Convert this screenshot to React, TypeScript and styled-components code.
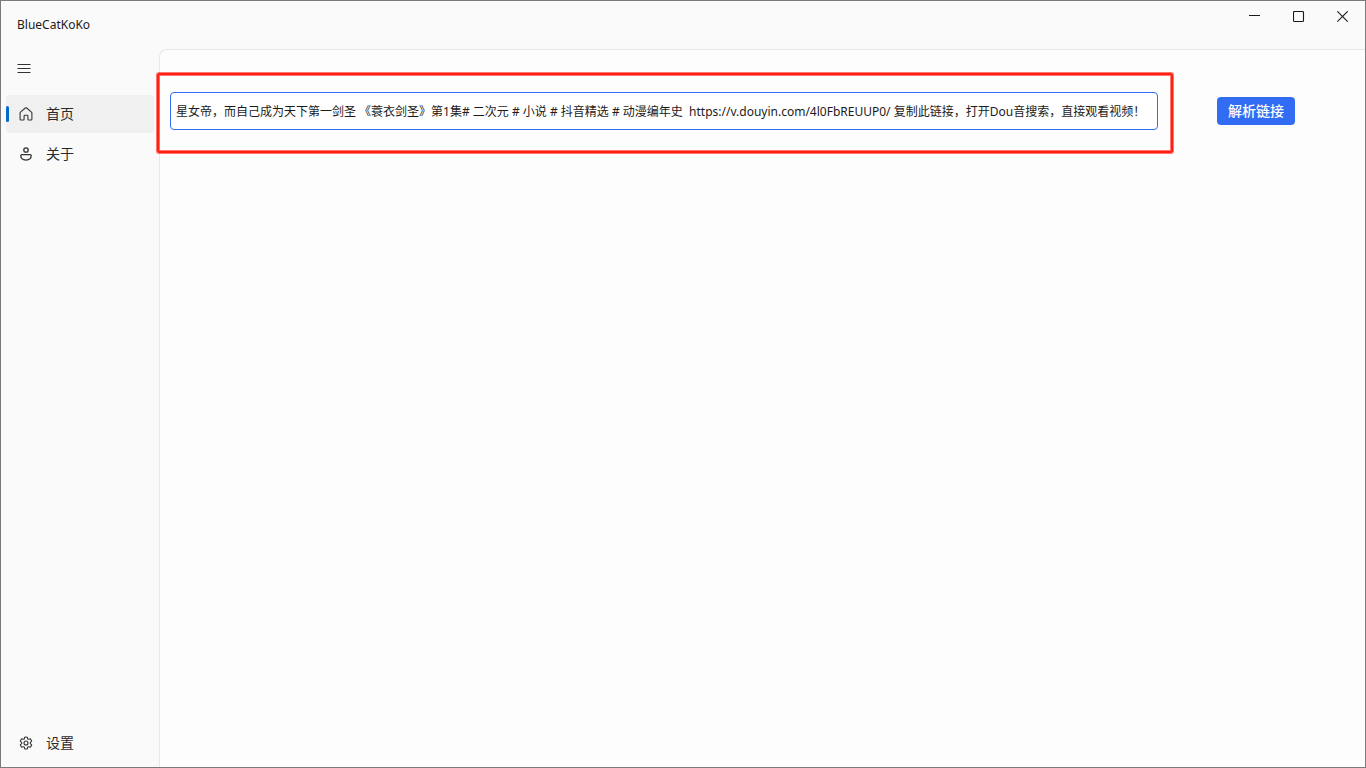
import { useLayoutEffect, useRef, useState } from 'react';
import styled, { createGlobalStyle } from 'styled-components';

const GlobalStyle = createGlobalStyle`
  *, *::before, *::after { box-sizing: border-box; }
  body {
    margin: 0;
    background: #fafafa;
    color: #1b1b1b;
    font-family: 'Noto Sans', 'Noto Sans CJK SC', sans-serif;
    font-size: 14px;
  }
  button, input { font: inherit; color: inherit; }
`;

const Window = styled.div`
  display: flex;
  flex-direction: column;
  min-height: 100vh;
  border: 1px solid #7a7a7a;
  background: #fafafa;
`;

const TitleBar = styled.header`
  display: flex;
  justify-content: space-between;
  height: 48px;
`;

const AppName = styled.h1`
  margin: 0;
  padding-left: 16px;
  font-size: 12px;
  font-weight: 400;
  line-height: 48px;
`;

const WindowControls = styled.div`
  display: flex;
`;

const ControlButton = styled.button`
  display: flex;
  align-items: center;
  justify-content: center;
  width: 44px;
  height: 32px;
  padding: 0;
  border: 0;
  background: transparent;
`;

const Body = styled.div`
  display: flex;
  flex: 1;
`;

const Sidebar = styled.nav`
  display: flex;
  flex-direction: column;
  width: 158px;
  padding: 0 5px 5px;
`;

const MenuButton = styled.button`
  display: flex;
  align-items: center;
  justify-content: center;
  width: 36px;
  height: 38px;
  margin-bottom: 8px;
  padding: 0;
  border: 0;
  background: transparent;
`;

const NavList = styled.ul`
  display: flex;
  flex: 1;
  flex-direction: column;
  gap: 2px;
  margin: 0;
  padding: 0;
  list-style: none;
`;

const NavItem = styled.li<{ $last?: boolean }>`
  margin-top: ${(p) => (p.$last ? 'auto' : '0')};
`;

const NavLink = styled.a<{ $active?: boolean }>`
  position: relative;
  display: flex;
  align-items: center;
  gap: 12px;
  height: 38px;
  padding-left: 12px;
  border-radius: 4px;
  background: ${(p) => (p.$active ? '#f0f0f0' : 'transparent')};
  color: #2b2b2b;
  line-height: 38px;
  text-decoration: none;

  &::before {
    content: '';
    position: absolute;
    left: 0;
    top: 11px;
    width: 3px;
    height: 16px;
    border-radius: 2px;
    background: ${(p) => (p.$active ? '#006cc8' : 'transparent')};
  }
`;

const Content = styled.main`
  flex: 1;
  min-width: 0;
  padding: 42px 11px 42px 10px;
  border: solid #e8e8e8;
  border-width: 1px 0 0 1px;
  border-top-left-radius: 8px;
  background: #fdfdfd;
`;

const LinkForm = styled.form`
  display: flex;
  align-items: center;
`;

const Highlight = styled.div`
  position: relative;
  flex: 1;
  min-width: 0;

  &::after {
    content: '';
    position: absolute;
    inset: -19px -15px -23px -13px;
    border: 2px solid #ff2012;
    border-radius: 2px;
    box-shadow: 0 0 0 1px rgba(255, 32, 18, 0.6), inset 0 0 0 1px rgba(255, 32, 18, 0.6);
    pointer-events: none;
  }
`;

const LinkInput = styled.input`
  display: block;
  width: 100%;
  height: 38px;
  padding: 0 12px 0 5px;
  border: 1px solid #326cf3;
  border-radius: 4px;
  outline: none;
  background: #fff;
  font-size: 12px;
`;

const Action = styled.div`
  display: flex;
  justify-content: center;
  width: 196px;
`;

const ParseButton = styled.button`
  width: 78px;
  height: 28px;
  padding: 0;
  border: 0;
  border-radius: 4px;
  background: #326cf3;
  color: #fff;
  font-weight: 500;
  line-height: 28px;
`;

const HomeIcon = () => (
  <svg width="16" height="16" viewBox="0 0 16 16" fill="none" stroke="#333" strokeWidth="1.1" strokeLinejoin="round" aria-hidden="true">
    <path d="M7.300 2 2.500 6.100a1.200 1.200 0 0 0-.4.9v6.200c0 .5.4.8.8.8h2.400c.5 0 .8-.3.8-.8V10c0-.5.4-.8.8-.8h2.200c.4 0 .8.3.8.8v3.200c0 .5.3.8.8.8h2.400c.4 0 .8-.3.8-.8V7c0-.4-.1-.7-.4-.9L8.700 2a1.100 1.100 0 0 0-1.400 0Z" />
  </svg>
);

const PersonIcon = () => (
  <svg width="16" height="16" viewBox="0 0 16 16" fill="none" stroke="#333" strokeWidth="1.3" strokeLinejoin="round" aria-hidden="true">
    <circle cx="8" cy="4" r="2.200" />
    <path d="M3.800 8.600h8.400c.6 0 1 .4 1 1 0 2.600-2.100 4.500-5.200 4.500s-5.200-1.900-5.200-4.500c0-.6.4-1 1-1Z" />
  </svg>
);

const GearIcon = () => (
  <svg width="16" height="16" viewBox="0 0 16 16" fill="none" stroke="#333" strokeWidth="1.1" strokeLinejoin="round" aria-hidden="true">
    <path d="M6.700 2.200Q8 1.700 9.300 2.200L9.700 3.900Q10.100 4.400 10.700 4.300L12.400 3.800Q13.300 4.800 13.700 6.100L12.400 7.300Q12.100 8 12.400 8.700L13.700 9.900Q13.300 11.200 12.400 12.200L10.700 11.700Q10.100 11.600 9.700 12.100L9.300 13.800Q8 14.300 6.700 13.800L6.300 12.100Q5.900 11.600 5.300 11.700L3.600 12.200Q2.700 11.200 2.300 9.900L3.600 8.700Q3.900 8 3.600 7.300L2.300 6.100Q2.700 4.800 3.600 3.800L5.300 4.300Q5.900 4.400 6.300 3.900Z" />
    <circle cx="8" cy="8" r="2" />
  </svg>
);

const MenuIcon = () => (
  <svg width="14" height="10" viewBox="0 0 14 10" stroke="#333" aria-hidden="true">
    <path d="M.5 1.500h13M.5 5.500h13M.5 9.500h13" />
  </svg>
);

const MinimizeIcon = () => (
  <svg width="12" height="12" viewBox="0 0 12 12" stroke="#1b1b1b" aria-hidden="true">
    <path d="M0 4.500h11" />
  </svg>
);

const MaximizeIcon = () => (
  <svg width="12" height="12" viewBox="0 0 12 12" fill="none" stroke="#1b1b1b" strokeWidth="1.100" aria-hidden="true">
    <rect x=".5" y=".5" width="10" height="10" rx="1" />
  </svg>
);

const CloseIcon = () => (
  <svg width="12" height="12" viewBox="0 0 12 12" stroke="#1b1b1b" strokeWidth="1.100" aria-hidden="true">
    <path d="M.3.3l10.400 10.400M10.700.3.3 10.700" />
  </svg>
);

const SHARED_TEXT =
  '星女帝，而自己成为天下第一剑圣 《蓑衣剑圣》第1集# 二次元 # 小说 # 抖音精选 # 动漫编年史  https://v.douyin.com/4l0FbREUUP0/ 复制此链接，打开Dou音搜索，直接观看视频！';

export default function App() {
  const [link, setLink] = useState(SHARED_TEXT);
  const inputRef = useRef<HTMLInputElement>(null);

  // Keep the end of a long pasted link in view.
  useLayoutEffect(() => {
    const input = inputRef.current;
    if (input) input.scrollLeft = input.scrollWidth;
  }, [link]);

  return (
    <>
      <GlobalStyle />
      <Window>
        <TitleBar>
          <AppName>BlueCatKoKo</AppName>
          <WindowControls>
            <ControlButton type="button" aria-label="最小化"><MinimizeIcon /></ControlButton>
            <ControlButton type="button" aria-label="最大化"><MaximizeIcon /></ControlButton>
            <ControlButton type="button" aria-label="关闭"><CloseIcon /></ControlButton>
          </WindowControls>
        </TitleBar>
        <Body>
          <Sidebar>
            <MenuButton type="button" aria-label="菜单"><MenuIcon /></MenuButton>
            <NavList>
              <NavItem><NavLink href="#home" $active aria-current="page"><HomeIcon />首页</NavLink></NavItem>
              <NavItem><NavLink href="#about"><PersonIcon />关于</NavLink></NavItem>
              <NavItem $last><NavLink href="#settings"><GearIcon />设置</NavLink></NavItem>
            </NavList>
          </Sidebar>
          <Content>
            <LinkForm onSubmit={(e) => e.preventDefault()}>
              <Highlight>
                <LinkInput
                  ref={inputRef}
                  type="text"
                  aria-label="视频链接"
                  value={link}
                  onChange={(e) => setLink(e.target.value)}
                />
              </Highlight>
              <Action><ParseButton type="submit">解析链接</ParseButton></Action>
            </LinkForm>
          </Content>
        </Body>
      </Window>
    </>
  );
}
